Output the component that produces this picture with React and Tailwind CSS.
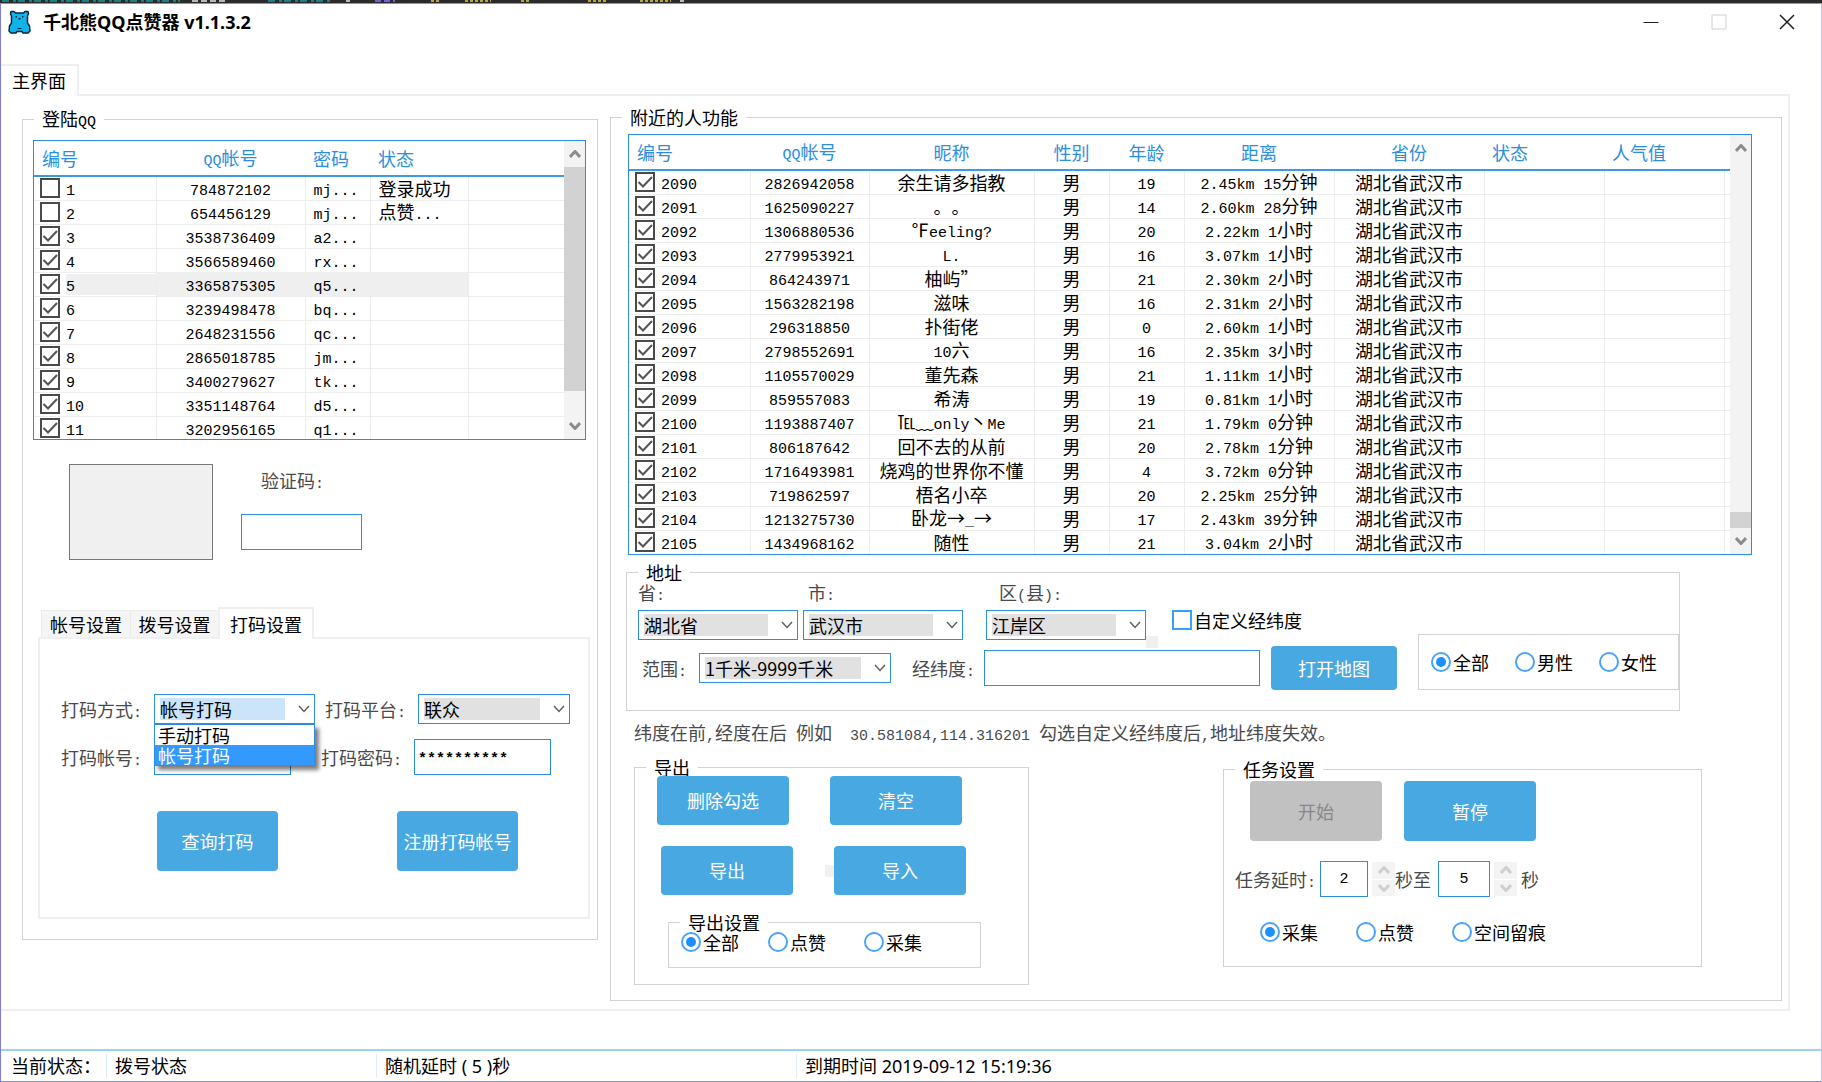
import React from 'react';

const accounts = [
    { id: 1, qq: '784872102', pwd: 'mj...', status: '登录成功', checked: false },
    { id: 2, qq: '654456129', pwd: 'mj...', status: '点赞...', checked: false },
    { id: 3, qq: '3538736409', pwd: 'a2...', checked: true },
    { id: 4, qq: '3566589460', pwd: 'rx...', checked: true },
    { id: 5, qq: '3365875305', pwd: 'q5...', checked: true, selected: true },
    { id: 6, qq: '3239498478', pwd: 'bq...', checked: true },
    { id: 7, qq: '2648231556', pwd: 'qc...', checked: true },
    { id: 8, qq: '2865018785', pwd: 'jm...', checked: true },
    { id: 9, qq: '3400279627', pwd: 'tk...', checked: true },
    { id: 10, qq: '3351148764', pwd: 'd5...', checked: true },
    { id: 11, qq: '3202956165', pwd: 'q1...', checked: true },
];

const people = [
    [2090, '2826942058', '余生请多指教', 19, '2.45km 15分钟'],
    [2091, '1625090227', '。。', 14, '2.60km 28分钟'],
    [2092, '1306880536', '℉eeling?', 20, '2.22km 1小时'],
    [2093, '2779953921', 'L.', 16, '3.07km 1小时'],
    [2094, '864243971', '柚屿”', 21, '2.30km 2小时'],
    [2095, '1563282198', '滋味', 16, '2.31km 2小时'],
    [2096, '296318850', '扑街佬', 0, '2.60km 1小时'],
    [2097, '2798552691', '10六', 16, '2.35km 3小时'],
    [2098, '1105570029', '董先森', 21, '1.11km 1小时'],
    [2099, '859557083', '希涛', 19, '0.81km 1小时'],
    [2100, '1193887407', '℡﹏only丶Me', 21, '1.79km 0分钟'],
    [2101, '806187642', '回不去的从前', 20, '2.78km 1分钟'],
    [2102, '1716493981', '烧鸡的世界你不懂', 4, '3.72km 0分钟'],
    [2103, '719862597', '梧名小卒', 20, '2.25km 25分钟'],
    [2104, '1213275730', '卧龙→_→', 17, '2.43km 39分钟'],
    [2105, '1434968162', '随性', 21, '3.04km 2小时'],
];

// Half-width characters are set in a monospace face, exactly half of a Chinese glyph wide
const Mixed = ({ text }) =>
    String(text).split(/([\x20-\x7e]+)/).filter(Boolean).map((part, i) =>
        /^[\x20-\x7e]/.test(part)
            ? <span key={i} className="whitespace-pre font-['Liberation_Mono',monospace] text-[15px] leading-none">{part}</span>
            : part
    );

const Chevron = ({ up, className }) => (
    <svg viewBox="0 0 12 8" className={className} fill="none" stroke="currentColor">
        <path d={up ? 'M1 7L6 1.5L11 7' : 'M1 1L6 6.5L11 1'} />
    </svg>
);

const Group = ({ title, className = '', children }) => (
    <fieldset className={`border border-[#d3d3d3] ${className}`}>
        <legend className="ml-[11px] px-2 leading-[18px]"><Mixed text={title} /></legend>
        {children}
    </fieldset>
);

const Check = ({ label, checked, blue }) => (
    <label className="flex items-center gap-0.5 leading-5">
        <span className="grid size-5 shrink-0 place-items-center">
            <input
                type="checkbox"
                defaultChecked={checked}
                aria-label={label ? undefined : '选择'}
                className={blue
                    ? 'peer col-start-1 row-start-1 size-5 appearance-none border-2 border-[#3b9ff5] bg-white'
                    : 'peer col-start-1 row-start-1 size-5 appearance-none border-2 border-[#4a4a4a] bg-white'}
            />
            <svg viewBox="0 0 20 20" className="pointer-events-none col-start-1 row-start-1 hidden size-5 fill-none stroke-[#555] stroke-2 peer-checked:block">
                <path d="M3.5 10L8 14.5L17 5" />
            </svg>
        </span>
        {label}
    </label>
);

const Radio = ({ name, label, checked }) => (
    <label className="flex items-center gap-0.5 leading-5">
        <input
            type="radio"
            name={name}
            defaultChecked={checked}
            className="size-5 appearance-none rounded-full border-2 border-[#4aa3fb] bg-white bg-clip-content p-[3px] checked:bg-[#1e8fff]"
        />
        {label}
    </label>
);

const Select = ({ id, options, focused, className = '', children }) => (
    <div className={`relative ${className}`}>
        <select
            id={id}
            className={focused
                ? 'block h-[30px] w-full appearance-none border border-[#2b8ee0] bg-[#cbe4f9] bg-clip-content py-[3px] pr-[29px] pl-[5px] leading-[22px] outline-none'
                : 'block h-[30px] w-full appearance-none border border-[#2b8ee0] bg-[#e1e1e1] bg-clip-content py-[3px] pr-[29px] pl-[5px] leading-[22px] outline-none'}
        >
            {options.map((o) => <option key={o}>{o}</option>)}
        </select>
        <Chevron className="pointer-events-none absolute top-[11px] right-[5px] h-2 w-3 stroke-[1.5px] text-[#606060]" />
        {children}
    </div>
);

const Field = ({ className = '', ...rest }) => (
    <input
        type="text"
        className={`h-9 border border-[#2b8ee0] bg-white px-[3px] font-['Liberation_Mono',monospace] text-[15px] outline-none ${className}`}
        {...rest}
    />
);

const Button = ({ className = '', children, disabled }) => (
    <button
        type="button"
        disabled={disabled}
        className={`rounded bg-[#47a8e2] text-white disabled:bg-[#c1c1c1] disabled:text-[#888] ${className}`}
    >
        {children}
    </button>
);

const ScrollBar = ({ thumb }) => (
    <div className="flex w-[21px] shrink-0 flex-col bg-[#f3f3f3] text-[#8c8c8c]">
        <button type="button" aria-label="向上滚动" className="grid h-[26px] shrink-0 place-items-center">
            <Chevron up className="h-2 w-3 stroke-[3px]" />
        </button>
        <div className="flex flex-1 flex-col">{thumb}</div>
        <button type="button" aria-label="向下滚动" className="grid h-[26px] shrink-0 place-items-center">
            <Chevron className="h-2 w-3 stroke-[3px]" />
        </button>
    </div>
);

const Spinner = () => (
    <span className="flex h-[34px] w-[23px] flex-col gap-px text-[#cfcfcf]">
        <button type="button" aria-label="增加" className="grid flex-1 place-items-center bg-[#f4f4f4]">
            <Chevron up className="h-2 w-3 stroke-[3px]" />
        </button>
        <button type="button" aria-label="减少" className="grid flex-1 place-items-center bg-[#f4f4f4]">
            <Chevron className="h-2 w-3 stroke-[3px]" />
        </button>
    </span>
);

const BearIcon = () => (
    <svg viewBox="0 0 23 24" className="h-6 w-[23px] shrink-0">
        <path
            d="M3 1.500H6L7.500 3H15.500L17 1.500H20L20.500 4L19.500 6V13L21.500 16L22 21L20 23H15L14 21.500H9L8 23H3L1 21L1.500 16L3.500 13V6L2.500 4Z"
            fill="#10b3ec"
            stroke="#0c2a36"
            strokeWidth="1.5"
            strokeLinejoin="round"
        />
        <path d="M7.500 6H9V7.500H7.500zM14 6h1.500v1.500H14zM10.500 8h2v1.500h-2z" fill="#0c2a36" />
        <path d="M9.500 18.500H13.500" stroke="#0c2a36" />
    </svg>
);

// Sliver of the code editor that stays visible behind the window
const BackdropEdge = () => (
    <div className="h-[3px] bg-[#2b2b2b]">
        <svg className="block h-[3px] w-[700px]" viewBox="0 0 700 3" strokeWidth="2" fill="none">
            <path d="M2 1H180M268 1H330" stroke="#1b7f86" strokeDasharray="7 4 3 2" />
            <path d="M192 1H227M346 1H350M680 1H684" stroke="#b8b8b8" strokeDasharray="6 3" />
            <path d="M375 1H395" stroke="#6a62d8" strokeDasharray="6 3" />
            <path d="M431 1H440M465 1H491M521 1H530M588 1H606M640 1H671" stroke="#b5a642" strokeDasharray="3 2" />
        </svg>
    </div>
);

const TitleBar = () => (
    <header className="flex h-[38px] items-center pb-0.5 pl-[7px]">
        <BearIcon />
        <h1 className="ml-3 flex-1 font-['Noto_Sans','Noto_Sans_CJK_SC',sans-serif] text-[18px] leading-6 font-bold">
            千北熊QQ点赞器 v1.1.3.2
        </h1>
        <button type="button" aria-label="最小化" className="grid h-full w-[68px] place-items-center">
            <svg viewBox="0 0 16 16" className="size-4 stroke-[#222]"><path d="M0.500 8.500H15.500" /></svg>
        </button>
        <button type="button" aria-label="最大化" disabled className="grid h-full w-[68px] place-items-center">
            <svg viewBox="0 0 16 16" className="size-4 fill-none stroke-[#d0d0d0]"><path d="M1 1H15V15H1Z" /></svg>
        </button>
        <button type="button" aria-label="关闭" className="grid h-full w-[68px] place-items-center">
            <svg viewBox="0 0 16 16" className="size-4 stroke-[#222] stroke-[1.5px]"><path d="M1 1L15 15M15 1L1 15" /></svg>
        </button>
    </header>
);

const AccountTable = () => (
    <div className="mr-[11px] ml-2.5 flex h-[300px] border border-[#2b8ee0]">
        <div className="flex-1 overflow-hidden">
            <table className="w-full table-fixed leading-[18px]">
                <colgroup>
                    <col className="w-[122px]" />
                    <col className="w-[149px]" />
                    <col className="w-[65px]" />
                    <col className="w-[98px]" />
                    <col />
                </colgroup>
                <thead>
                    <tr className="h-[35px] border-b-2 border-[#3b99e6] text-left text-[#2b8ee0] [&>th]:font-normal">
                        <th className="pl-2">编号</th>
                        <th className="text-center"><Mixed text="QQ帐号" /></th>
                        <th className="pl-2">密码</th>
                        <th className="pl-2">状态</th>
                        <th></th>
                    </tr>
                </thead>
                <tbody>
                    {accounts.map((row) => (
                        <tr key={row.id} className="h-6 border-b border-[#ededed] [&>td]:border-r [&>td]:border-[#ededed] [&>td:last-child]:border-r-0">
                            <td className="pl-1.5">
                                <div className="flex items-center gap-1.5">
                                    <Check checked={row.checked} />
                                    <span className={row.selected ? 'flex-1 bg-[#efefef]' : 'flex-1'}><Mixed text={row.id} /></span>
                                </div>
                            </td>
                            <td className={row.selected ? 'bg-[#efefef] text-center' : 'text-center'}><Mixed text={row.qq} /></td>
                            <td className={row.selected ? 'bg-[#efefef] pl-2' : 'pl-2'}><Mixed text={row.pwd} /></td>
                            <td className={row.selected ? 'bg-[#efefef] pl-2' : 'pl-2'}><Mixed text={row.status || ''} /></td>
                            <td></td>
                        </tr>
                    ))}
                </tbody>
            </table>
        </div>
        <ScrollBar thumb={<div className="h-[224px] bg-[#d2d2d2]" />} />
    </div>
);

const PeopleTable = () => (
    <div className="mr-[29px] ml-[17px] flex h-[421px] border border-[#2b8ee0]">
        <div className="flex-1 overflow-hidden">
            <table className="w-full table-fixed leading-[18px]">
                <colgroup>
                    <col className="w-[121px]" />
                    <col className="w-[119px]" />
                    <col className="w-[165px]" />
                    <col className="w-[75px]" />
                    <col className="w-[75px]" />
                    <col className="w-[150px]" />
                    <col className="w-[150px]" />
                    <col className="w-[120px]" />
                    <col className="w-[120px]" />
                    <col />
                </colgroup>
                <thead>
                    <tr className="h-[35px] border-b-2 border-[#3b99e6] text-[#2b8ee0] [&>th]:font-normal">
                        <th className="pl-2 text-left">编号</th>
                        <th><Mixed text="QQ帐号" /></th>
                        <th>昵称</th>
                        <th>性别</th>
                        <th>年龄</th>
                        <th>距离</th>
                        <th>省份</th>
                        <th className="pl-2 text-left">状态</th>
                        <th className="pl-2 text-left">人气值</th>
                        <th></th>
                    </tr>
                </thead>
                <tbody>
                    {people.map(([id, qq, nick, age, distance]) => (
                        <tr key={id} className="h-6 border-b border-[#ededed] text-center [&>td]:border-r [&>td]:border-[#ededed] [&>td:last-child]:border-r-0">
                            <td className="pl-1.5">
                                <div className="flex items-center gap-1.5">
                                    <Check checked />
                                    <span><Mixed text={id} /></span>
                                </div>
                            </td>
                            <td><Mixed text={qq} /></td>
                            <td className="whitespace-nowrap [text-spacing-trim:space-all]"><Mixed text={nick} /></td>
                            <td>男</td>
                            <td><Mixed text={age} /></td>
                            <td className="whitespace-nowrap"><Mixed text={distance} /></td>
                            <td>湖北省武汉市</td>
                            <td></td>
                            <td></td>
                            <td></td>
                        </tr>
                    ))}
                </tbody>
            </table>
        </div>
        <ScrollBar
            thumb={<>
                <div className="flex-1" />
                <div className="h-4 bg-[#d2d2d2]" />
            </>}
        />
    </div>
);

const CaptchaSettings = () => (
    <div className="mr-[7px] ml-[15px] border-2 border-[#efefef] pt-[55px] pb-[46px] pl-[21px]">
        <div className="flex items-center">
            <label htmlFor="mode" className="w-[93px] text-[#4a4a4a]"><Mixed text="打码方式:" /></label>
            <Select id="mode" options={['帐号打码', '手动打码']} focused className="w-[161px]">
                <ul role="listbox" className="absolute top-full left-0 z-10 w-full border border-[#2b8ee0] bg-white leading-5 shadow-[4px_4px_4px_rgba(0,0,0,0.5)]">
                    <li role="option" aria-selected="false" className="px-[3px]">手动打码</li>
                    <li role="option" aria-selected="true" className="border border-dotted border-[#c87a35] bg-[#3399ff] px-0.5 leading-[18px] text-white">帐号打码</li>
                </ul>
            </Select>
            <label htmlFor="platform" className="ml-2.5 w-[93px] text-[#4a4a4a]"><Mixed text="打码平台:" /></label>
            <Select id="platform" options={['联众']} className="w-[152px]" />
        </div>
        <div className="mt-[15px] flex items-center">
            <label htmlFor="user" className="w-[93px] text-[#4a4a4a]"><Mixed text="打码帐号:" /></label>
            <Field id="user" className="w-[137px]" />
            <label htmlFor="pass" className="ml-[30px] w-[93px] text-[#4a4a4a]"><Mixed text="打码密码:" /></label>
            <Field id="pass" className="w-[137px] pt-1 font-bold" defaultValue="**********" />
        </div>
        <div className="mt-9 ml-24 flex gap-[119px]">
            <Button className="h-[60px] w-[121px]">查询打码</Button>
            <Button className="h-[60px] w-[121px]">注册打码帐号</Button>
        </div>
    </div>
);

const LoginPanel = () => (
    <Group title="登陆QQ" className="mt-px w-[576px] shrink-0 self-start pb-5">
        <div className="pt-2.5">
            <AccountTable />
            <div className="mt-6 ml-[46px] flex gap-7">
                <div className="h-24 w-36 border border-[#777] bg-[#f0f0f0]" />
                <div className="flex flex-col pt-[7px]">
                    <label htmlFor="captcha" className="pl-5 leading-[18px] text-[#4a4a4a]"><Mixed text="验证码:" /></label>
                    <Field id="captcha" className="mt-[22px] w-[121px]" />
                </div>
            </div>
            <div role="tablist" className="mt-[47px] ml-[18px] flex items-end">
                <button type="button" role="tab" className="h-[27px] w-[90px] border border-b-0 border-[#ebebeb] bg-[#f5f5f5] leading-5">帐号设置</button>
                <button type="button" role="tab" className="h-[27px] w-[87px] border-t border-[#ebebeb] bg-[#f5f5f5] leading-5">拨号设置</button>
                <button type="button" role="tab" aria-selected="true" className="z-10 -mb-0.5 h-8 w-24 border-2 border-b-0 border-[#efefef] bg-white leading-5">打码设置</button>
            </div>
            <CaptchaSettings />
        </div>
    </Group>
);

const AddressGroup = () => (
    <Group title="地址" className="mt-2 mr-[101px] ml-[15px]">
        <div className="flex">
            <div className="flex-1 pt-0.5 pb-[18px] pl-[11px]">
                <div className="flex items-end">
                    <div className="w-40">
                        <label htmlFor="province" className="mb-1.5 block leading-[18px] text-[#4a4a4a]"><Mixed text="省:" /></label>
                        <Select id="province" options={['湖北省']} />
                    </div>
                    <div className="ml-[5px] w-40">
                        <label htmlFor="city" className="mb-1.5 block pl-[5px] leading-[18px] text-[#4a4a4a]"><Mixed text="市:" /></label>
                        <Select id="city" options={['武汉市']} />
                    </div>
                    <div className="ml-[23px] w-40">
                        <label htmlFor="district" className="mb-1.5 block pl-[13px] leading-[18px] text-[#4a4a4a]"><Mixed text="区(县):" /></label>
                        <Select id="district" options={['江岸区']}>
                            <span className="absolute top-full left-full -mt-1 size-3 bg-[#f0f0f0]" />
                        </Select>
                    </div>
                    <div className="mb-2.5 ml-[26px]"><Check label="自定义经纬度" blue /></div>
                </div>
                <div className="mt-1 flex h-12 items-center">
                    <label htmlFor="range" className="ml-1 w-[57px] text-[#4a4a4a]"><Mixed text="范围:" /></label>
                    <Select id="range" options={['1千米-9999千米']} className="w-48" />
                    <label htmlFor="coords" className="ml-[21px] w-[72px] text-[#4a4a4a]"><Mixed text="经纬度:" /></label>
                    <Field id="coords" className="min-w-0 flex-1" />
                    <Button className="ml-[11px] h-11 w-[126px]">打开地图</Button>
                </div>
            </div>
            <div className="mb-5 ml-[21px] flex h-14 w-[261px] items-center gap-[26px] self-end border border-[#d3d3d3] pl-3">
                <Radio name="gender" label="全部" checked />
                <Radio name="gender" label="男性" />
                <Radio name="gender" label="女性" />
            </div>
        </div>
    </Group>
);

const ExportGroup = () => (
    <Group title="导出" className="w-[395px] self-start pb-4">
        <div className="ml-[22px] flex gap-[41px]">
            <Button className="h-[49px] w-[132px]">删除勾选</Button>
            <Button className="h-[49px] w-[132px]">清空</Button>
        </div>
        <div className="mt-[21px] ml-[26px] flex items-center">
            <Button className="h-[49px] w-[132px]">导出</Button>
            <span className="ml-8 h-3 w-[9px] bg-[#f0f0f0]" />
            <Button className="h-[49px] w-[132px]">导入</Button>
        </div>
        <Group title="导出设置" className="mt-[18px] ml-[33px] w-[313px] pb-[15px]">
            <div className="ml-3 flex pt-px">
                <div className="w-[87px]"><Radio name="export" label="全部" checked /></div>
                <div className="w-24"><Radio name="export" label="点赞" /></div>
                <Radio name="export" label="采集" />
            </div>
        </Group>
    </Group>
);

const TaskGroup = () => (
    <Group title="任务设置" className="mt-0.5 w-[479px] self-start pb-6">
        <div className="mt-[3px] ml-[26px] flex gap-[22px]">
            <Button disabled className="h-[60px] w-[132px]">开始</Button>
            <Button className="h-[60px] w-[132px]">暂停</Button>
        </div>
        <div className="mt-5 ml-[11px] flex items-center text-[#4a4a4a]">
            <label htmlFor="delay-min" className="w-[85px]"><Mixed text="任务延时:" /></label>
            <Field id="delay-min" className="mr-1 w-12 text-center text-black" defaultValue="2" />
            <Spinner />
            <label htmlFor="delay-max" className="w-[43px]">秒至</label>
            <Field id="delay-max" className="mr-1 w-[52px] text-center text-black" defaultValue="5" />
            <Spinner />
            <span className="ml-1">秒</span>
        </div>
        <div className="mt-[25px] ml-9 flex gap-[38px]">
            <Radio name="task" label="采集" checked />
            <Radio name="task" label="点赞" />
            <Radio name="task" label="空间留痕" />
        </div>
    </Group>
);

const NearbyPanel = () => (
    <Group title="附近的人功能" className="min-w-0 flex-1 pb-[15px]">
        <div className="pt-2">
            <PeopleTable />
            <AddressGroup />
            <p className="mt-3 ml-[23px] leading-[18px] text-[#4a4a4a]">
                <Mixed text="纬度在前,经度在后 例如  30.581084,114.316201 勾选自定义经纬度后,地址纬度失效。" />
            </p>
            <div className="mt-3.5 mr-[79px] ml-[23px] flex justify-between">
                <ExportGroup />
                <TaskGroup />
            </div>
        </div>
    </Group>
);

const StatusBar = () => (
    <footer className="mt-auto flex h-[33px] items-center border-t-2 border-b border-t-[#9fd0f5] border-b-[#8c8cd8] font-['Noto_Sans','Noto_Sans_CJK_SC',sans-serif] leading-6">
        <span className="w-[105px] pl-2.5">当前状态：</span>
        <span className="w-[270px] border-l border-[#dceefb] pl-2">拨号状态</span>
        <span className="w-[420px] border-l border-[#dceefb] pl-2">随机延时 ( 5 )秒</span>
        <span className="flex-1 border-l border-[#dceefb] pl-2">到期时间 2019-09-12 15:19:36</span>
    </footer>
);

const App = () => (
    <div className="min-h-screen bg-white font-['Noto_Sans_CJK_SC',sans-serif] text-[18px] text-black">
        <BackdropEdge />
        <div className="flex min-h-[calc(100vh-3px)] flex-col border border-b-0 border-t-[#8c8cdc] border-r-[#c3c3ea] border-l-[#7c7cdc]">
            <TitleBar />
            <div role="tablist" className="mt-[22px] flex">
                <button type="button" role="tab" aria-selected="true" className="z-10 -mb-0.5 h-8 w-[78px] border-2 border-b-0 border-l-0 border-[#efefef] bg-white pb-0.5 leading-5">主界面</button>
            </div>
            <main className="mr-[31px] flex gap-3 border-2 border-l-0 border-[#efefef] pt-3 pr-1.5 pb-2 pl-[21px]">
                <LoginPanel />
                <NearbyPanel />
            </main>
            <StatusBar />
        </div>
    </div>
);

export default App;
